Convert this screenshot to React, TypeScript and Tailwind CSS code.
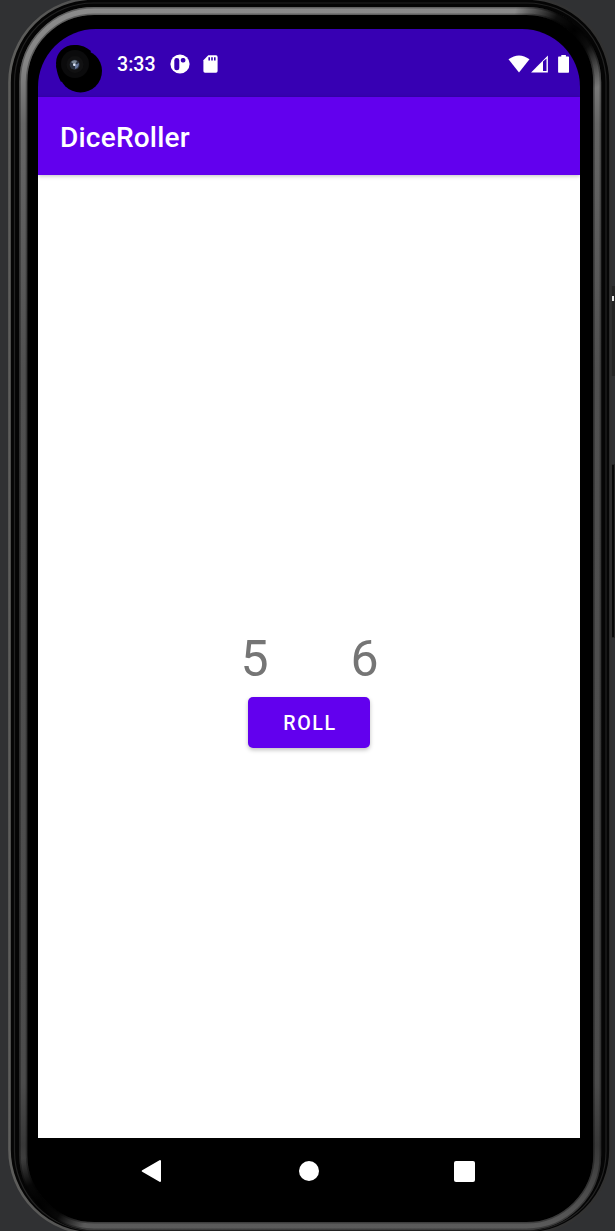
import { useState } from "react";

function PhoneFrame() {
  return (
    <svg className="absolute inset-0" width="615" height="1231" viewBox="0 0 615 1231" fill="none" aria-hidden="true">
      <defs>
        <linearGradient id="rim" x1="0" y1="0" x2="0" y2="1231" gradientUnits="userSpaceOnUse">
          <stop offset="0" stopColor="#8c8c8c" />
          <stop offset="0.05" stopColor="#858585" />
          <stop offset="0.1" stopColor="#666666" />
          <stop offset="0.3" stopColor="#505050" />
          <stop offset="0.88" stopColor="#4b4b4b" />
          <stop offset="0.93" stopColor="#383838" />
          <stop offset="1" stopColor="#5c5c5c" />
        </linearGradient>
        <radialGradient id="dimTop" cx="574" cy="30" r="62" gradientUnits="userSpaceOnUse">
          <stop offset="0" stopColor="#000" />
          <stop offset="0.35" stopColor="#000" stopOpacity="0.9" />
          <stop offset="1" stopColor="#000" stopOpacity="0" />
        </radialGradient>
        <radialGradient id="dimBottom" cx="38" cy="1206" r="50" gradientUnits="userSpaceOnUse">
          <stop offset="0" stopColor="#000" />
          <stop offset="0.45" stopColor="#000" stopOpacity="0.9" />
          <stop offset="1" stopColor="#000" stopOpacity="0" />
        </radialGradient>
        <linearGradient id="edge" x1="0" y1="0" x2="615" y2="0" gradientUnits="userSpaceOnUse">
          <stop offset="0" stopColor="#60605e" />
          <stop offset="0.2" stopColor="#484848" />
          <stop offset="1" stopColor="#303030" />
        </linearGradient>
      </defs>
      <rect x="609" y="286" width="6" height="90" fill="#242424" />
      <rect x="609" y="464" width="6" height="174" fill="#242424" />
      <rect x="9.5" y="-1.5" width="601" height="1235" rx="84" fill="#050505" stroke="url(#edge)" strokeWidth="2.6" />
      <rect x="14.5" y="3" width="591.5" height="1227.5" rx="79" stroke="#222222" strokeWidth="1.2" />
      <rect x="23.3" y="11" width="573.9" height="1215" rx="71" fill="#000" stroke="url(#rim)" strokeWidth="8" />
      <rect x="26.5" y="14.2" width="567.5" height="1208.6" rx="68" stroke="#000" strokeOpacity="0.3" strokeWidth="1.6" />
      <rect x="20.1" y="7.8" width="580.3" height="1221.4" rx="74" stroke="#000" strokeOpacity="0.3" strokeWidth="1.6" />
      <rect x="23.3" y="11" width="573.9" height="1215" rx="71" stroke="url(#dimTop)" strokeWidth="9" />
      <rect x="23.3" y="11" width="573.9" height="1215" rx="71" stroke="url(#dimBottom)" strokeWidth="9" />
      <rect x="612" y="296" width="2" height="5" fill="#e8e8e8" />
      <rect x="612" y="465" width="2" height="172" fill="#080808" />
    </svg>
  );
}

function Camera() {
  return (
    <svg className="absolute left-[17px] top-[15px]" width="50" height="52" viewBox="55 44 50 52" aria-hidden="true">
      <circle cx="80.5" cy="71" r="21.5" fill="#000" />
      <circle cx="74" cy="63" r="18" fill="#000" />
      <path d="M74 45Q83 44 91 51L82 70ZM56 65Q57 75 61 82L75 72Z" fill="#000" />
      <circle cx="75" cy="64" r="14" fill="#0b0b0c" />
      <circle cx="75" cy="64.5" r="8.5" fill="#111112" />
      <circle cx="74.7" cy="64.7" r="5" fill="#2a3240" />
      <path d="M71 62Q74 59 77 61L75 65Z" fill="#768392" />
      <path d="M75 65L79 63Q79 68 75 69Z" fill="#66779d" />
      <circle cx="74.3" cy="64.7" r="1.3" fill="#e4edff" />
    </svg>
  );
}

function StatusBar() {
  return (
    <div className="relative h-[68px] shrink-0 bg-[#3700b3]">
      <Camera />
      <div className="flex h-[69px] items-center justify-between pl-[79px] pr-[10px]">
        <div className="flex items-center">
          <span className="w-[53px] pt-[3px] text-[19.6px] leading-6 font-medium">3:33</span>
          <svg width="20" height="20" viewBox="0 0 20 20" aria-hidden="true">
            <circle cx="10" cy="10" r="9.6" fill="#fff" />
            <rect x="4.3" y="4" width="5" height="12.3" rx="2.4" fill="#3700b3" />
            <rect x="10.8" y="4" width="4.6" height="4.6" rx="1.8" fill="#3700b3" />
          </svg>
          <svg className="ml-[13px]" width="15" height="18" viewBox="0 0 15 18" aria-hidden="true">
            <path d="M5.3.3H13Q14.6.3 14.6 2V16Q14.6 17.7 13 17.7H2Q.4 17.7.4 16V5.3Z" fill="#fff" />
            <path d="M6.2 2.2v3.4M9 2.2v3.4M11.8 2.2v3.4" stroke="#3700b3" strokeWidth="1.6" />
          </svg>
        </div>
        <div className="flex items-center">
          <svg width="22" height="18" viewBox="0 0 22 18" aria-hidden="true">
            <path d="M.5 4.3Q11-3.3 21.5 4.3L11 17.5Z" fill="#fff" />
          </svg>
          <svg className="ml-px" width="18" height="18" viewBox="0 0 18 18" aria-hidden="true">
            <path d="M16.9.5V17.5H.1Z" fill="#fff" />
            <path d="M12 6.6L15.5 3.4V16H12Z" fill="#3700b3" />
          </svg>
          <svg className="ml-[9px]" width="12" height="18" viewBox="0 0 12 18" aria-hidden="true">
            <path d="M3.3 0h4.6v1.5H10.3q.7 0 .7.8V17q0 .8-.7.8H.8q-.7 0-.7-.8V2.3Q.1 1.5.8 1.5h2.5Z" fill="#fff" />
          </svg>
        </div>
      </div>
    </div>
  );
}

function NavigationBar() {
  return (
    <nav className="flex h-[66px] shrink-0 items-center justify-between pr-[105px] pl-[103px]">
      <button aria-label="Back">
        <svg width="21" height="24" viewBox="0 0 21 24">
          <path d="M1.7 12L19 2V22Z" fill="#fff" stroke="#fff" strokeWidth="2" strokeLinejoin="round" />
        </svg>
      </button>
      <button aria-label="Home" className="ml-[2px] size-[20px] rounded-full bg-white" />
      <button aria-label="Recents" className="size-[21px] rounded-[2px] bg-white" />
    </nav>
  );
}

export default function App() {
  const [dice, setDice] = useState([5, 6]);
  const roll = () => setDice([0, 0].map(() => Math.floor(Math.random() * 6) + 1));

  return (
    <div className="relative h-[1231px] w-[615px] overflow-hidden bg-[#303133] font-['Roboto',sans-serif]">
      <PhoneFrame />
      <div className="relative flex h-full flex-col pt-[29px] pr-[35px] pb-[27px] pl-[38px] text-white">
        <div className="flex h-[1109px] shrink-0 flex-col overflow-hidden rounded-t-[58px]">
          <StatusBar />
          <header className="relative flex h-[78px] shrink-0 items-center bg-[#6200ee] pt-[3px] pl-[22px] shadow-[0_1px_4px_rgba(0,0,0,0.25)]">
            <h1 className="text-[28px] leading-8 font-medium tracking-[0.22px]">DiceRoller</h1>
          </header>
          <main className="flex flex-1 flex-col items-center bg-white pt-[454px]">
            <div className="flex gap-[82px] pl-[1px] text-[50px] leading-[60px] text-[#757575]">
              <span className="w-[28px] text-center">{dice[0]}</span>
              <span className="w-[28px] text-center">{dice[1]}</span>
            </div>
            <button
              onClick={roll}
              className="mt-[8px] h-[50.5px] w-[122px] rounded-[5px] bg-[#6200ee] pt-[3.5px] pl-[2px] text-[19.6px] leading-6 font-medium tracking-[1.65px] shadow-[0_2px_4px_rgba(0,0,0,0.25)]"
            >
              ROLL
            </button>
          </main>
        </div>
        <NavigationBar />
      </div>
    </div>
  );
}
